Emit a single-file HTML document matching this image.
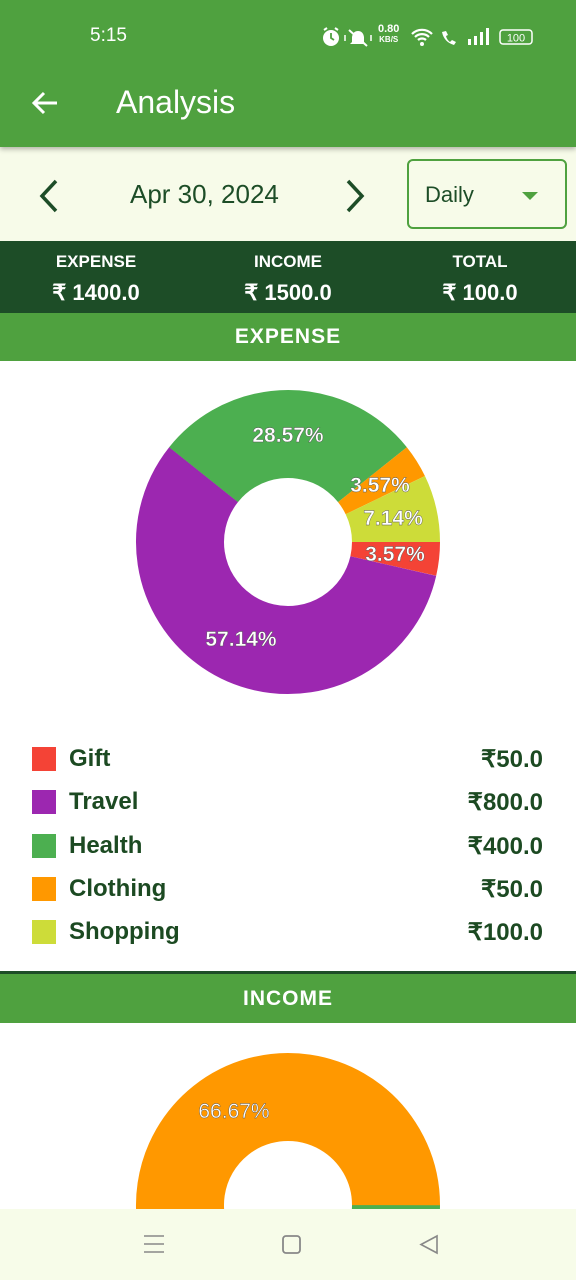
<!DOCTYPE html>
<html style="overflow:hidden;width:576px;height:1280px"><head><meta charset="utf-8"><style>
*{margin:0;padding:0;box-sizing:border-box}
body{width:576px;height:1280px;overflow:hidden;background:#fff;font-family:"Liberation Sans",sans-serif;position:relative}
.abs{position:absolute}
.hdr{left:0;top:0;width:576px;height:147px;background:#4fa13f;box-shadow:0 2px 5px rgba(0,0,0,.3);z-index:2}
.bar{left:0;top:147px;width:576px;height:94px;background:#f7fbe9}
.sum{left:0;top:241px;width:576px;height:72px;background:#1d4d27;color:#fff}
.sum div{position:absolute;width:192px;text-align:center;font-weight:bold}
.band{left:0;width:576px;height:48px;background:#4fa13f;color:#fff;font-weight:bold;font-size:21px;text-align:center;line-height:48px;letter-spacing:1px}
.lg{left:32px;width:511px;height:30px;color:#1c4a22;font-size:24px;font-weight:bold}
.lg i{position:absolute;left:0;top:0;width:24px;height:24px}
.lg span{position:absolute;left:37px;top:-2px}
.lg b{position:absolute;right:0;top:-2px}
.nav{left:0;top:1209px;width:576px;height:71px;background:#f7fce9}
</style></head><body>
<div class="abs hdr">
 <div class="abs" style="left:90px;top:25px;color:#fff;font-size:19px">5:15</div>
 <svg class="abs" style="left:320px;top:26px" width="56" height="22"><circle cx="11" cy="12" r="8" fill="#fff"/><path d="M11 7v5l3 2" stroke="#4fa13f" stroke-width="1.8" fill="none"/><path d="M4 4l3-2M18 4l-3-2" stroke="#fff" stroke-width="2"/><path d="M38 5q5 0 6 6v5l2 2H30l2-2v-5q1-6 6-6z" fill="#fff"/><path d="M29 4l18 16" stroke="#fff" stroke-width="2"/><path d="M25 9v6M51 9v6" stroke="#fff" stroke-width="1.5"/></svg>
 <div class="abs" style="left:378px;top:24px;color:#fff;font-size:11px;font-weight:bold;line-height:10px;text-align:center">0.80<br><span style="font-size:8px">KB/S</span></div>
 <svg class="abs" style="left:410px;top:26px" width="125" height="22"><path d="M2 8a14 14 0 0 1 20 0M5 11a10 10 0 0 1 14 0M8 14a6 6 0 0 1 8 0" stroke="#fff" stroke-width="2.2" fill="none"/><circle cx="12" cy="18" r="2" fill="#fff"/><path d="M32 6q2 10 12 13l2-3-4-2-2 2q-3-2-4-6l2-1-2-4z" fill="#fff"/><rect x="58" y="13" width="3" height="6" fill="#fff"/><rect x="64" y="10" width="3" height="9" fill="#fff"/><rect x="70" y="6" width="3" height="13" fill="#fff"/><rect x="76" y="2" width="3" height="17" fill="#fff"/><rect x="90" y="4" width="32" height="14" rx="3" stroke="#fff" stroke-width="1.5" fill="none"/><text x="106" y="15.5" text-anchor="middle" font-size="11" fill="#fff" font-family="Liberation Sans">100</text></svg>
 <svg class="abs" style="left:30px;top:89px" width="30" height="30"><path d="M27 14H5M14 4 4 14l10 10" stroke="#fff" stroke-width="3" fill="none"/></svg>
 <div class="abs" style="left:116px;top:84px;color:#fff;font-size:32px">Analysis</div>
</div>
<div class="abs bar">
 <svg class="abs" style="left:38px;top:32px" width="22" height="34"><path d="M18 2 4 17l14 15" stroke="#1d4d27" stroke-width="3.5" fill="none"/></svg>
 <div class="abs" style="left:130px;top:32px;font-size:26px;color:#1d4d27">Apr 30, 2024</div>
 <svg class="abs" style="left:344px;top:32px" width="22" height="34"><path d="M4 2l14 15L4 32" stroke="#1d4d27" stroke-width="3.5" fill="none"/></svg>
 <div class="abs" style="left:407px;top:12px;width:160px;height:70px;border:2px solid #4fa13f;border-radius:6px"></div>
 <div class="abs" style="left:425px;top:35px;font-size:22px;color:#1d4d27">Daily</div>
 <div class="abs" style="left:522px;top:45px;width:0;height:0;border-left:8px solid transparent;border-right:8px solid transparent;border-top:8px solid #4fa13f"></div>
</div>
<div class="abs sum">
 <div style="left:0;top:11px;font-size:17px">EXPENSE</div><div style="left:0;top:39px;font-size:22px">₹ 1400.0</div>
 <div style="left:192px;top:11px;font-size:17px">INCOME</div><div style="left:192px;top:39px;font-size:22px">₹ 1500.0</div>
 <div style="left:384px;top:11px;font-size:17px">TOTAL</div><div style="left:384px;top:39px;font-size:22px">₹ 100.0</div>
</div>
<div class="abs band" style="top:313px">EXPENSE</div>
<svg class="abs" style="left:0;top:361px" width="576" height="350">
 <g transform="translate(288 181)" fill="none" stroke-width="88">
  <circle r="108" stroke="#f44336" stroke-dasharray="24.23 700"/>
  <circle r="108" stroke="#9c27b0" stroke-dasharray="387.76 700" transform="rotate(12.857)"/>
  <circle r="108" stroke="#4caf50" stroke-dasharray="193.88 700" transform="rotate(218.57)"/>
  <circle r="108" stroke="#ff9800" stroke-dasharray="24.23 700" transform="rotate(321.43)"/>
  <circle r="108" stroke="#cddc39" stroke-dasharray="48.47 700" transform="rotate(334.29)"/>
 </g>
 <g fill="#fff" font-size="21" font-family="Liberation Sans" font-weight="bold" text-anchor="middle" stroke="#555" stroke-width=".4">
  <text x="288" y="81">28.57%</text><text x="380" y="131">3.57%</text><text x="393" y="164">7.14%</text><text x="395" y="200">3.57%</text><text x="241" y="285">57.14%</text>
 </g>
</svg>
<div class="abs lg" style="top:747px"><i style="background:#f44336"></i><span>Gift</span><b>₹50.0</b></div>
<div class="abs lg" style="top:790px"><i style="background:#9c27b0"></i><span>Travel</span><b>₹800.0</b></div>
<div class="abs lg" style="top:834px"><i style="background:#4caf50"></i><span>Health</span><b>₹400.0</b></div>
<div class="abs lg" style="top:877px"><i style="background:#ff9800"></i><span>Clothing</span><b>₹50.0</b></div>
<div class="abs lg" style="top:920px"><i style="background:#cddc39"></i><span>Shopping</span><b>₹100.0</b></div>
<div class="abs" style="left:0;top:971px;width:576px;height:3px;background:#1d4d27"></div>
<div class="abs band" style="top:974px;height:49px;line-height:49px">INCOME</div>
<svg class="abs" style="left:0;top:1023px" width="576" height="186">
 <g transform="translate(288 182)" fill="none" stroke-width="88">
  <circle r="108" stroke="#4caf50" stroke-dasharray="226.2 700"/>
  <circle r="108" stroke="#ff9800" stroke-dasharray="452.4 700" transform="rotate(120)"/>
 </g>
 <text x="234" y="95" fill="#fff" font-size="21" font-family="Liberation Sans" text-anchor="middle" stroke="#555" stroke-width=".4">66.67%</text>
</svg>
<div class="abs nav">
 <svg class="abs" style="left:140px;top:24px" width="300" height="24"><path d="M4 3h20M4 11h20M4 19h20" stroke="#888" stroke-width="1.6"/><rect x="143" y="3" width="17" height="17" rx="3" stroke="#888" stroke-width="1.8" fill="none"/><path d="M297 3 281 11.5 297 20z" stroke="#888" stroke-width="1.6" fill="none"/></svg>
</div>
</body></html>
